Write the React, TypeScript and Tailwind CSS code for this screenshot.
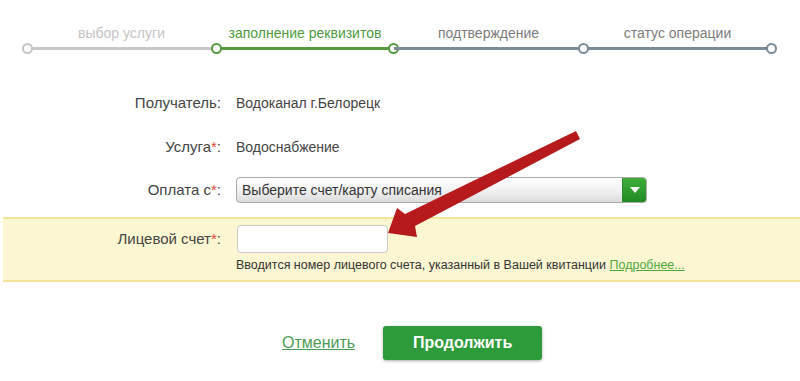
import React from "react";

const steps = [
  { label: "выбор услуги", w: 189, text: "text-[#c4c4c4]", bar: "bg-[#c8c8c8]" },
  { label: "заполнение реквизитов", w: 178, text: "text-[#4e9a3c]", bar: "bg-[#56993f]" },
  { label: "подтверждение", w: 189, text: "text-[#7b7b7b]", bar: "bg-[#7a8b95]" },
  { label: "статус операции", w: 189, text: "text-[#7b7b7b]", bar: "bg-[#7a8b95]" },
];

function Dot({ color, left }: { color: string; left: boolean }) {
  return (
    <span
      className={`absolute top-[-4px] w-[11px] h-[11px] rounded-full bg-white border-2 ${color} ${
        left ? "left-[-5px]" : "right-[-5px]"
      }`}
    />
  );
}

export default function App() {
  return (
    <div
      className="relative w-[800px] h-[381px] bg-white overflow-hidden text-[#333]"
      style={{ fontFamily: '"Liberation Sans", Arial, sans-serif' }}
    >
      {/* progress */}
      <div className="flex pl-[27px] pt-[25px]">
        {steps.map((s, i) => (
          <div key={i} className="flex flex-col" style={{ width: s.w }}>
            <div className={`text-[14px] leading-[17px] text-center ${s.text}`}>{s.label}</div>
            <div className={`relative mt-[5px] h-[3px] ${s.bar}`}>
              {i === 0 && <Dot color="border-[#c4c4c4]" left />}
              {i === 1 && <Dot color="border-[#56993f]" left />}
              {i === 1 && <Dot color="border-[#56993f]" left={false} />}
              {i === 3 && <Dot color="border-[#7a8b95]" left />}
              {i === 3 && <Dot color="border-[#7a8b95]" left={false} />}
            </div>
          </div>
        ))}
      </div>

      {/* form */}
      <div className="mt-[40px] flex flex-col">
        <div className="flex items-center h-[26px]">
          <div className="w-[221px] text-right text-[15px] text-[#444]">Получатель:</div>
          <div className="ml-[15px] text-[14px] text-[#444]">Водоканал г.Белорецк</div>
        </div>
        <div className="flex items-center h-[26px] mt-[18px]">
          <div className="w-[221px] text-right text-[15px] text-[#444]">
            Услуга<span className="text-[#e04a3a]">*</span>:
          </div>
          <div className="ml-[15px] text-[14px] text-[#444]">Водоснабжение</div>
        </div>
        <div className="flex items-center h-[26px] mt-[17px]">
          <div className="w-[221px] text-right text-[15px] text-[#444]">
            Оплата с<span className="text-[#e04a3a]">*</span>:
          </div>
          <div className="ml-[15px] w-[411px] h-[26px] flex rounded-[4px] border border-[#a9a9a9] overflow-hidden bg-gradient-to-b from-white via-[#f2f2f2] to-[#dcdcdc]">
            <div className="flex-1 flex items-center pl-[5px] text-[14px] text-[#333]">
              Выберите счет/карту списания
            </div>
            <div className="w-[24px] h-full flex items-center justify-center bg-gradient-to-b from-[#3fae3a] to-[#1f8a22] border-l border-[#2a8a2a]">
              <svg width="10" height="7" viewBox="0 0 10 7">
                <path d="M0 0 L10 0 L5 6 Z" fill="#fff" />
              </svg>
            </div>
          </div>
        </div>

        <div className="mt-[14px] ml-[3px] h-[65px] bg-[#fcf6d2] border-y-2 border-[#f4e598] flex flex-col">
          <div className="flex items-center mt-[6px] h-[28px]">
            <div className="w-[218px] text-right text-[15px] text-[#444]">
              Лицевой счет<span className="text-[#e04a3a]">*</span>:
            </div>
            <div className="ml-[16px] w-[151px] h-[28px] bg-white rounded-[4px] border border-[#c8c8c8]" />
          </div>
          <div className="ml-[233px] mt-[5px] text-[12.5px] leading-[15px] text-[#333]">
            Вводится номер лицевого счета, указанный в Вашей квитанции{" "}
            <span className="text-[#4ea83a] underline">Подробнее...</span>
          </div>
        </div>

        <div className="flex items-center mt-[44px] pl-[282px]">
          <span className="text-[16px] text-[#4c9a56] underline">Отменить</span>
          <div className="ml-[28px] w-[159px] h-[34px] rounded-[3px] bg-[#2e9b3a] shadow-[0_1px_3px_rgba(0,0,0,0.35)] flex items-center justify-center text-white font-bold text-[16px]">
            Продолжить
          </div>
        </div>
      </div>

      {/* red arrow overlay */}
      <svg className="absolute left-0 top-0 pointer-events-none" width="800" height="381">
        <defs>
          <linearGradient id="ar" x1="0" y1="0" x2="1" y2="1">
            <stop offset="0" stopColor="#c41f1f" />
            <stop offset="1" stopColor="#a8151a" />
          </linearGradient>
        </defs>
        <path
          d="M576 131 L580 139 L415 226 L417 237 L388 233 L397 208 L405 214 Z"
          fill="url(#ar)"
        />
      </svg>
    </div>
  );
}
